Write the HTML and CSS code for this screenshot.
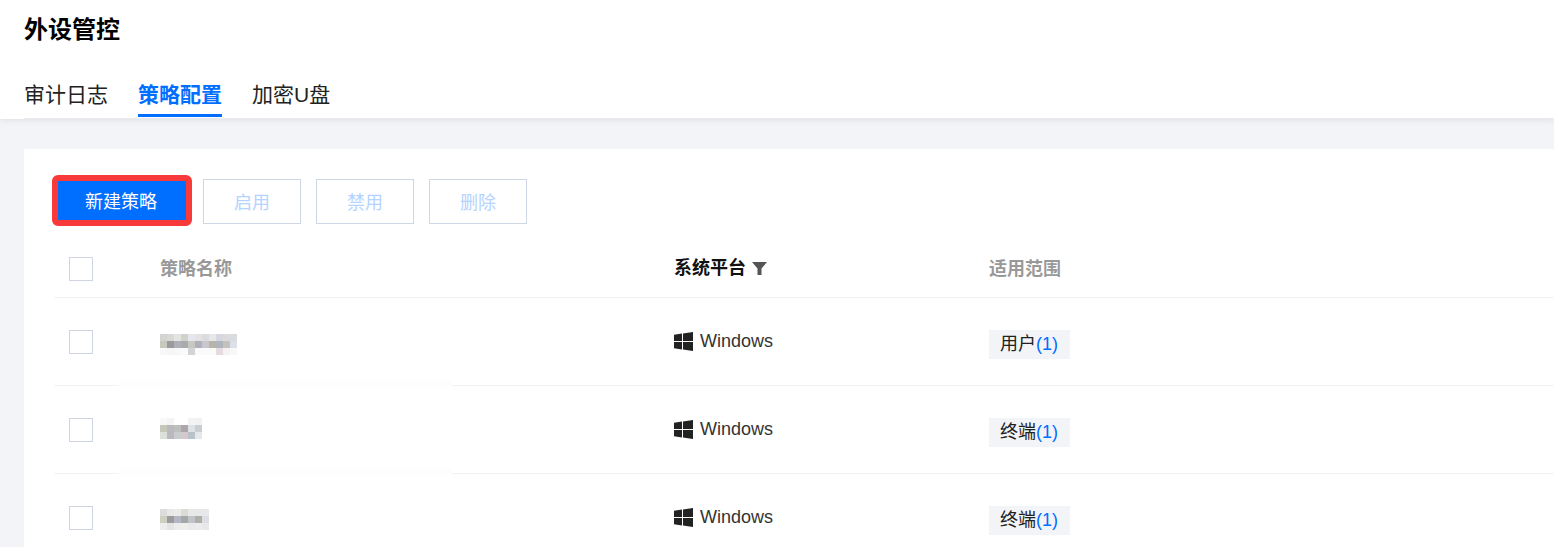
FILE: index.html
```html
<!DOCTYPE html>
<html lang="zh-CN">
<head>
<meta charset="utf-8">
<title>外设管控</title>
<link rel="stylesheet" href="styles.css">
</head>
<body>
<header class="page-head">
  <h1 class="page-title">外设管控</h1>
  <nav class="tabs">
    <a class="tab">审计日志</a>
    <a class="tab tab-active">策略配置</a>
    <a class="tab">加密U盘</a>
  </nav>
</header>
<main class="content">
  <section class="card">
    <div class="toolbar">
      <button class="btn btn-primary">新建策略</button>
      <button class="btn">启用</button>
      <button class="btn">禁用</button>
      <button class="btn">删除</button>
    </div>
    <div class="table">
      <div class="row row-head">
        <span class="check"></span>
        <span class="th">策略名称</span>
        <span class="th th-active">系统平台
          <svg class="filter" viewBox="0 0 15 13" width="15" height="13"><path d="M0 0H15L9.5 6.5V13H5.5V6.5Z" fill="#555"/></svg>
        </span>
        <span class="th">适用范围</span>
      </div>
      <div class="row">
        <span class="check"></span>
        <svg class="blur blur-long" width="77" height="21" viewBox="0 0 77 21" shape-rendering="crispEdges">
          <rect x="0" y="0" width="7" height="7" fill="#d4d4d2"/><rect x="7" y="0" width="7" height="7" fill="#d8d8d6"/><rect x="14" y="0" width="7" height="7" fill="#e4e4e2"/><rect x="21" y="0" width="7" height="7" fill="#d0d2cc"/><rect x="28" y="0" width="7" height="7" fill="#e4e8ee"/><rect x="35" y="0" width="7" height="7" fill="#e6e2e4"/><rect x="42" y="0" width="7" height="7" fill="#dcdcdc"/><rect x="49" y="0" width="7" height="7" fill="#e6e8e8"/><rect x="56" y="0" width="7" height="7" fill="#d4d8de"/><rect x="63" y="0" width="7" height="7" fill="#dcdada"/><rect x="70" y="0" width="7" height="7" fill="#d8dce0"/>
          <rect x="0" y="7" width="7" height="7" fill="#c8c9bc"/><rect x="7" y="7" width="7" height="7" fill="#989a9c"/><rect x="14" y="7" width="7" height="7" fill="#afb0b8"/><rect x="21" y="7" width="7" height="7" fill="#a8acae"/><rect x="28" y="7" width="7" height="7" fill="#c8c8c0"/><rect x="35" y="7" width="7" height="7" fill="#aeb0bc"/><rect x="42" y="7" width="7" height="7" fill="#c8c8cc"/><rect x="49" y="7" width="7" height="7" fill="#b8b4aa"/><rect x="56" y="7" width="7" height="7" fill="#b0b4bc"/><rect x="63" y="7" width="7" height="7" fill="#c4c2bc"/><rect x="70" y="7" width="7" height="7" fill="#dce0e8"/>
          <rect x="0" y="14" width="7" height="7" fill="#f8f8f8"/><rect x="7" y="14" width="7" height="7" fill="#f6f6f4"/><rect x="14" y="14" width="7" height="7" fill="#f8f8f8"/><rect x="21" y="14" width="7" height="7" fill="#fafafa"/><rect x="28" y="14" width="7" height="7" fill="#d4d4d6"/><rect x="35" y="14" width="7" height="7" fill="#fafafc"/><rect x="42" y="14" width="7" height="7" fill="#fafafa"/><rect x="49" y="14" width="7" height="7" fill="#fafafa"/><rect x="56" y="14" width="7" height="7" fill="#e4dcde"/><rect x="63" y="14" width="7" height="7" fill="#f4f2f2"/><rect x="70" y="14" width="7" height="7" fill="#f8f8f8"/>
        </svg>
        <span class="platform">
          <svg class="win" viewBox="0 0 19 19" width="19" height="19"><path d="M0 2.7 8 1.6V9H0ZM9 1.4 19 0V9H9ZM0 10H8V17.4L0 16.3ZM9 10H19V19L9 17.6Z" fill="#222"/></svg>
          Windows
        </span>
        <span class="tag">用户<span class="count">(1)</span></span>
      </div>
      <div class="row row-masked">
        <span class="check"></span>
        <svg class="blur blur-short" width="42" height="21" viewBox="0 0 42 21" shape-rendering="crispEdges">
          <rect x="0" y="0" width="7" height="7" fill="#f8f8f6"/><rect x="7" y="0" width="7" height="7" fill="#f4f4f4"/><rect x="14" y="0" width="7" height="7" fill="#ffffff"/><rect x="21" y="0" width="7" height="7" fill="#ffffff"/><rect x="28" y="0" width="7" height="7" fill="#f4f2f2"/><rect x="35" y="0" width="7" height="7" fill="#f2f2f2"/>
          <rect x="0" y="7" width="7" height="7" fill="#c4c8b8"/><rect x="7" y="7" width="7" height="7" fill="#bcb8c0"/><rect x="14" y="7" width="7" height="7" fill="#bcc0bc"/><rect x="21" y="7" width="7" height="7" fill="#b0a4ac"/><rect x="28" y="7" width="7" height="7" fill="#dce2e6"/><rect x="35" y="7" width="7" height="7" fill="#c8ced2"/>
          <rect x="0" y="14" width="7" height="7" fill="#dce0da"/><rect x="7" y="14" width="7" height="7" fill="#bcb8c0"/><rect x="14" y="14" width="7" height="7" fill="#c8ccca"/><rect x="21" y="14" width="7" height="7" fill="#d4c8ce"/><rect x="28" y="14" width="7" height="7" fill="#b8c2c8"/><rect x="35" y="14" width="7" height="7" fill="#e4e8ec"/>
        </svg>
        <span class="platform">
          <svg class="win" viewBox="0 0 19 19" width="19" height="19"><path d="M0 2.7 8 1.6V9H0ZM9 1.4 19 0V9H9ZM0 10H8V17.4L0 16.3ZM9 10H19V19L9 17.6Z" fill="#222"/></svg>
          Windows
        </span>
        <span class="tag">终端<span class="count">(1)</span></span>
      </div>
      <div class="row row-masked">
        <span class="check"></span>
        <svg class="blur blur-mid" width="49" height="21" viewBox="0 0 49 21" shape-rendering="crispEdges">
          <rect x="0" y="0" width="7" height="7" fill="#dcdcdc"/><rect x="7" y="0" width="7" height="7" fill="#e8e8e8"/><rect x="14" y="0" width="7" height="7" fill="#ebebe9"/><rect x="21" y="0" width="7" height="7" fill="#dcdcd4"/><rect x="28" y="0" width="7" height="7" fill="#e8e8e8"/><rect x="35" y="0" width="7" height="7" fill="#e6e8e8"/><rect x="42" y="0" width="7" height="7" fill="#e6e8ec"/>
          <rect x="0" y="7" width="7" height="7" fill="#d0d0c0"/><rect x="7" y="7" width="7" height="7" fill="#9c9c9e"/><rect x="14" y="7" width="7" height="7" fill="#b4b8c2"/><rect x="21" y="7" width="7" height="7" fill="#a4a8a8"/><rect x="28" y="7" width="7" height="7" fill="#c0c4c8"/><rect x="35" y="7" width="7" height="7" fill="#b0aea8"/><rect x="42" y="7" width="7" height="7" fill="#dcdee4"/>
          <rect x="0" y="14" width="7" height="7" fill="#eeeeee"/><rect x="7" y="14" width="7" height="7" fill="#e4e4e4"/><rect x="14" y="14" width="7" height="7" fill="#ececec"/><rect x="21" y="14" width="7" height="7" fill="#eeeeec"/><rect x="28" y="14" width="7" height="7" fill="#eaeaea"/><rect x="35" y="14" width="7" height="7" fill="#ececec"/><rect x="42" y="14" width="7" height="7" fill="#e8e8ea"/>
        </svg>
        <span class="platform">
          <svg class="win" viewBox="0 0 19 19" width="19" height="19"><path d="M0 2.7 8 1.6V9H0ZM9 1.4 19 0V9H9ZM0 10H8V17.4L0 16.3ZM9 10H19V19L9 17.6Z" fill="#222"/></svg>
          Windows
        </span>
        <span class="tag">终端<span class="count">(1)</span></span>
      </div>
    </div>
  </section>
</main>
</body>
</html>
```
FILE: styles.css
```css
* { box-sizing: border-box; }
html, body { margin: 0; height: 547px; overflow: hidden; }
body {
  background: #f3f4f8;
  color: #222;
  font-family: "Liberation Sans", "Noto Sans CJK SC", sans-serif;
  font-size: 18px;
  display: flex;
  flex-direction: column;
}
.page-head {
  background: #fff;
  height: 119px;
  padding-left: 24px;
  box-shadow: 0 2px 6px rgba(0, 0, 0, .07);
  position: relative;
  flex: none;
}
.page-title {
  margin: 0;
  padding-top: 14px;
  font-size: 24px;
  line-height: 32px;
  font-weight: 700;
  color: #000;
}
.tabs {
  display: flex;
  gap: 30px;
  margin-top: 30px;
  height: 43px;
  border-bottom: 1px solid #e9eaee;
}
.tab {
  font-size: 21px;
  line-height: 38px;
  height: 41px;
  color: #222;
}
.tab-active {
  color: #006eff;
  font-weight: 700;
  border-bottom: 3px solid #006eff;
}
.content { padding: 30px 0 0 24px; flex: 1; }
.card { background: #fff; padding: 30px 0 0 30px; height: 100%; }
.toolbar { display: flex; gap: 15px; height: 45px; align-items: flex-start; }
.btn {
  width: 98px;
  height: 45px;
  background: #fff;
  border: 1px solid #cfd7e6;
  color: #b5d3ff;
  font: inherit;
  padding: 0 0 2px;
}
.btn-primary {
  width: 140px;
  height: 51px;
  margin: -4px -4px 0 -2px;
  background: #006eff;
  color: #fff;
  border: 6px solid #f93a3a;
  border-radius: 6px;
  padding: 0 2px 2px 0;
}
.table { margin-top: 17px; }
.row {
  display: grid;
  grid-template-columns: 91px 514px 315px 1fr;
  align-items: center;
  height: 88px;
  border-bottom: 1px solid #f2f2f3;
  padding-left: 15px;
  position: relative;
}
.row-head { height: 57px; }
.row-masked::before {
  content: "";
  position: absolute;
  left: 64px;
  width: 334px;
  top: -5px;
  height: 6px;
  background: #fdfdfd;
}
.check {
  width: 24px;
  height: 24px;
  border: 1px solid #cfd5e2;
  background: #fff;
}
.th { font-weight: 700; color: #999; margin-top: -4px; }
.th-active { color: #111; display: flex; align-items: center; gap: 6px; margin-top: -2px; line-height: 24px; }
.blur { display: block; }
.blur-long { margin-top: 6px; }
.blur-short { margin-top: -2px; }
.blur-mid { margin-top: 4px; }
.platform { display: flex; align-items: center; gap: 7px; font-size: 18px; color: #333; }
.win { flex: none; }
.tag {
  justify-self: start;
  background: #f3f4f8;
  height: 29px;
  line-height: 29px;
  padding: 0 12px 0 11px;
  margin-top: 5px;
  color: #222;
}
.count { color: #006eff; }
```
